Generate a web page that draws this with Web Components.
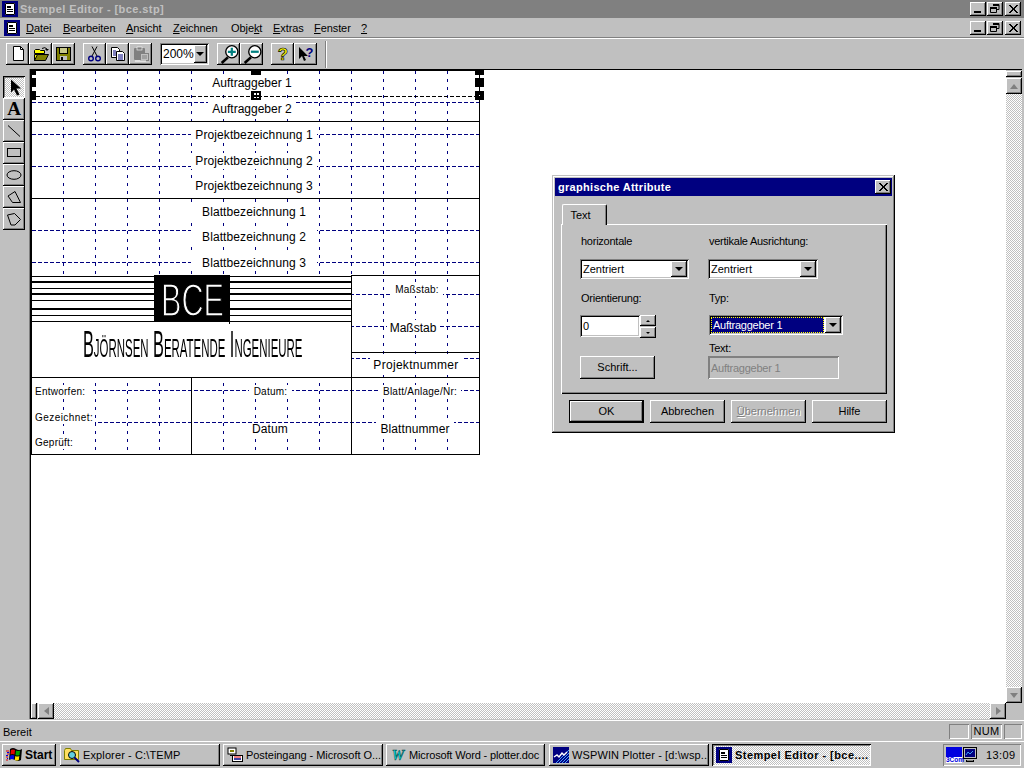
<!DOCTYPE html>
<html lang="de"><head><meta charset="utf-8"><title>Stempel Editor</title>
<style>
html,body{margin:0;padding:0;background:#c0c0c0}
body{font:11px "Liberation Sans",Arial,sans-serif;color:#000}
</style></head>
<body>
<win-app>
  <win-titlebar></win-titlebar>
  <win-menubar></win-menubar>
  <win-toolbar></win-toolbar>
  <win-work>
    <tool-palette></tool-palette>
    <mdi-client><stamp-sheet></stamp-sheet></mdi-client>
  </win-work>
  <status-bar></status-bar>
  <task-bar></task-bar>
  <attr-dialog></attr-dialog>
</win-app>
<script>
const RAISED='box-shadow:inset -1px -1px #000,inset 1px 1px #fff,inset -2px -2px #808080;';
const SUNKEN='box-shadow:inset 1px 1px #808080,inset -1px -1px #fff,inset 2px 2px #000,inset -2px -2px #c0c0c0;';
const DITHER='background:conic-gradient(#fff 25%,#c0c0c0 0 50%,#fff 0 75%,#c0c0c0 0) 0 0/2px 2px;';
const ICONS={
doc:`<rect width="16" height="16" fill="#000080"/><rect x="3" y="2" width="10" height="12" fill="#fff"/><path d="M3.5 2.5h9v11h-9z" fill="none" stroke="#000"/><path d="M5 5h4v2H5zM5 8h6v1H5zM5 10h6v1H5z" fill="#000"/>`,
new:`<path d="M3.5 .5h7l3 3v11h-10z" fill="#fff" stroke="#000"/><path d="M10.5 .5v3h3" fill="none" stroke="#000"/>`,
open:`<path d="M1.5 4.5l1-1h4l1 1h4v3h-10z" fill="#ffff00" stroke="#000"/><path d="M1.5 14.5v-6h10v6z" fill="#ffff00" stroke="#000"/><path d="M1.5 14.5l3-6h11l-3 6z" fill="#808000" stroke="#000"/><path d="M9 2.500q3-2 5 .5" fill="none" stroke="#000"/><path d="M12 3h4l-2 2z" fill="#000"/>`,
save:`<rect x=".5" y="1.500" width="14" height="13" fill="#808000" stroke="#000"/><rect x="3" y="2" width="9" height="6" fill="#000"/><rect x="4" y="2" width="7" height="5" fill="#c8c88a"/><rect x="4" y="10" width="7" height="4" fill="#c0c0c0"/><rect x="5" y="11" width="2" height="3" fill="#000"/>`,
cut:`<path d="M5 10L10 .5M10 10L5 .5" stroke="#000" fill="none"/><circle cx="4" cy="12.500" r="2.300" fill="none" stroke="#000080" stroke-width="1.400"/><circle cx="11" cy="12.500" r="2.300" fill="none" stroke="#000080" stroke-width="1.400"/>`,
copy:`<path d="M1.500 1.500h6l2 2v8h-8z" fill="#fff" stroke="#000"/><path d="M6.500 5.500h6l2 2v7h-8z" fill="#fff" stroke="#000"/><path d="M3 5h3M3 7h3M3 9h3M8 9h5M8 11h5M8 13h5" stroke="#000080"/>`,
paste:`<rect x="1" y="2" width="11" height="12" rx="1" fill="#808080"/><rect x="4" y="1" width="5" height="3" fill="#808080" stroke="#fff" stroke-width=".6"/><rect x="7.500" y="7.500" width="8" height="7" fill="#c0c0c0" stroke="#808080"/><path d="M9 10h5M9 12h5" stroke="#808080"/><path d="M2 15h11" stroke="#fff"/>`,
zin:`<path d="M7 11L1.500 16" stroke="#000" stroke-width="2.400"/><circle cx="10.500" cy="6" r="5.400" fill="#fff" stroke="#000" stroke-width="1.200"/><path d="M7 6h7M10.500 2.500v7" stroke="#008080" stroke-width="2"/>`,
zout:`<path d="M7 11L1.500 16" stroke="#000" stroke-width="2.400"/><circle cx="10.500" cy="6" r="5.400" fill="#fff" stroke="#000" stroke-width="1.200"/><path d="M7 6h7" stroke="#008080" stroke-width="2"/>`,
help:`<text x="8" y="13.500" text-anchor="middle" font-family="Liberation Sans" font-weight="700" font-size="15" fill="#ffff00" stroke="#000" stroke-width=".6">?</text>`,
ctx:`<path d="M1 1v12l3-3 2 5 2-1-2-4h4z" fill="#000"/><text x="11.500" y="11" text-anchor="middle" font-family="Liberation Sans" font-weight="700" font-size="13" fill="#000080">?</text>`,
flag:`<path d="M4 2q3-2 6 0t6 0l-1 11q-3 2-6 0t-6 0z" fill="#000"/><path d="M5 3q2-1 4 0l-.500 4.500q-2-1-4 0z" fill="#e00000"/><path d="M10 3.500q2 1 4 0l-.500 4.500q-2 1-4 0z" fill="#00a000"/><path d="M4.300 8.500q2-1 4 0l-.500 4q-2-1-4 0z" fill="#0000e0"/><path d="M9.300 9q2 1 4 0l-.500 4q-2 1-4 0z" fill="#ffe000"/><path d="M0 4h3M1 7h2M0 10h2M0 13h2" stroke="#e00000"/><path d="M1 5.500h2M0 8.500h2M1 11.500h1" stroke="#0000e0"/>`,
explorer:`<path d="M.5 3.500l1-2h5l1 2h7v9h-14z" fill="#ffe060" stroke="#808000"/><circle cx="8" cy="8" r="3.500" fill="#60d0e0" stroke="#000"/><path d="M10.500 10.500l4.500 4.500" stroke="#000080" stroke-width="2"/>`,
mail:`<rect x="1" y="1" width="8" height="6" fill="#fff" stroke="#000"/><rect x="3" y="3" width="4" height="2" fill="#808000"/><path d="M3 8h4v1H3z" fill="#000"/><rect x="5.500" y="8.500" width="10" height="6" fill="#fff" stroke="#000"/><path d="M7 10h7" stroke="#e00000"/><path d="M7 12h7" stroke="#000080" stroke-width="1.500"/>`,
word:`<text x="8" y="13" text-anchor="middle" font-family="Liberation Serif" font-style="italic" font-weight="700" font-size="14" fill="#00d8d8" stroke="#004040" stroke-width=".5">W</text>`,
wsp:`<rect width="16" height="16" fill="#000080"/><path d="M9 16L16 9M12 16l4-4M6 16L16 6M3 16L16 3" stroke="#40a0ff"/><path d="M1 10l3-2 2 2 3-4 2 2 3-3" stroke="#fff" stroke-width="1.400" fill="none"/>`,
monitor:`<rect x="1.500" y=".5" width="13" height="11" fill="#c0c0c0" stroke="#000"/><rect x="3" y="2" width="10" height="8" fill="#000080"/><path d="M4 8l2-3 2 2 3-3" stroke="#40a0ff" fill="none"/><path d="M4 13h8v2H4z" fill="#000"/><path d="M5 13h6v1H5z" fill="#808080"/>`
};
function icon(n,s=16){return `<svg width="${s}" height="${s}" viewBox="0 0 16 16" style="display:block;flex:none;overflow:visible" aria-hidden="true">${ICONS[n]}</svg>`}
function def(name,css,html){customElements.define(name,class extends HTMLElement{
  connectedCallback(){if(this.shadowRoot)return;const r=this.attachShadow({mode:'open'});
    r.innerHTML=`<style>${css}</style>`+(typeof html==='function'?html(this):html);}
});}

def('win-app',`:host{display:flex;flex-direction:column;width:1024px;height:768px;position:relative;overflow:hidden;background:#c0c0c0}`,`<slot></slot>`);

def('win-ctl',`:host{display:block;width:16px;height:14px;background:#c0c0c0;${RAISED}}svg{display:block}`,
 el=>{const k=el.getAttribute('k');const p={min:'<path d="M4 9h7v2H4z"/>',res:'<path d="M6 2.500h6v5h-2" fill="none" stroke="#000"/><path d="M6 2h6v2H6z"/><path d="M3.500 5.500h6v5h-6z" fill="#c0c0c0" stroke="#000"/><path d="M3 5h7v2H3z"/>',x:'<path d="M4 3l8 8M5 3l8 8M12 3l-8 8M13 3l-8 8" stroke="#000" fill="none"/>'}[k];
  return `<svg width="16" height="14" viewBox="0 0 16 14">${p}</svg>`});

def('win-titlebar',`:host{display:flex;align-items:center;height:18px;background:#808080;color:#c0c0c0;padding-left:2px;flex:none}
 b{margin-left:2px;font:700 11px "Liberation Sans",sans-serif;letter-spacing:.42px;white-space:nowrap}
 .c{margin-left:auto;display:flex;padding-right:3px}win-ctl+win-ctl{margin-left:1px}win-ctl:last-child{margin-left:2px}`,
 `${icon('doc')}<b>Stempel Editor - [bce.stp]</b><div class="c"><win-ctl k="min"></win-ctl><win-ctl k="res"></win-ctl><win-ctl k="x"></win-ctl></div>`);

def('win-menubar',`:host{display:flex;align-items:center;height:19px;padding-left:4px;flex:none;border-bottom:1px solid #808080;box-shadow:0 1px #fff;margin-bottom:1px;font-size:11px;box-sizing:content-box;letter-spacing:-.08px}
 .ic{margin-right:6px}span{display:block;white-space:nowrap;flex:none}
 .c{margin-left:auto;display:flex;padding-right:3px}win-ctl+win-ctl{margin-left:1px}win-ctl:last-child{margin-left:2px}`,
 ()=>{const items=[['<u>D</u>atei',37],['<u>B</u>earbeiten',63],['<u>A</u>nsicht',47],['<u>Z</u>eichnen',58],['Obje<u>k</u>t',42],['<u>E</u>xtras',41],['<u>F</u>enster',47],['<u>?</u>',12]];
 return `<div class="ic">${icon('doc')}</div>`+items.map(([t,w])=>`<span style="width:${w}px">${t}</span>`).join('')+`<div class="c"><win-ctl k="min"></win-ctl><win-ctl k="res"></win-ctl><win-ctl k="x"></win-ctl></div>`});

def('tool-btn',`:host{display:flex;align-items:center;justify-content:center;width:23px;height:22px;background:#c0c0c0;${RAISED}flex:none}`,`<slot></slot>`);

def('win-toolbar',`:host{display:flex;align-items:flex-start;height:26px;padding:4px 0 0 6px;flex:none;position:relative}
 .g{display:flex;margin-right:8px}
 .combo{width:49px;height:22px;box-sizing:border-box;margin-right:8px;background:#fff;${SUNKEN}display:flex;align-items:center;padding:2px 2px 2px 3px;font-size:12px;flex:none}
 .combo span{flex:1}.arr{width:16px;height:18px;background:#c0c0c0;${RAISED}display:flex;align-items:center;justify-content:center}
 .arr i{border:4px solid transparent;border-top:4px solid #000;border-bottom:0;display:block}
 .sep{width:0;height:27px;border-left:1px solid #808080;border-right:1px solid #fff;margin-top:-2px;margin-left:0}`,
 ()=>{const g=a=>`<div class="g">${a.map(n=>`<tool-btn>${icon(n,n[0]=='z'||n=='help'?18:16)}</tool-btn>`).join('')}</div>`;
 return g(['new','open','save'])+g(['cut','copy','paste'])+`<div class="combo"><span>200%</span><div class="arr"><i></i></div></div>`+g(['zin','zout'])+g(['help','ctx'])+`<div class="sep"></div>`});

def('win-work',`:host{display:flex;flex:1;min-height:0}`,`<slot></slot>`);

def('tool-palette',`:host{display:flex;flex-direction:column;width:22px;padding:7px 5px 0 3px;flex:none;box-shadow:inset -1px 0 #808080}
 tool-btn{width:22px}tool-btn.on{${DITHER}box-shadow:inset 1px 1px #000,inset -1px -1px #fff,inset 2px 2px #808080}
 text{font:700 19px "Liberation Serif",serif}`,
 ()=>{const s=(b,c='')=>`<tool-btn class="${c}"><svg width="22" height="22" viewBox="0 0 22 22" style="display:block">${b}</svg></tool-btn>`;
 return s('<path d="M8 3.500v13l3-3 3 6 2.500-1-3-6h4.500z" fill="#000"/>','on')
 +s('<text x="11" y="17" text-anchor="middle" fill="#000">A</text>')
 +s('<path d="M5 5.500L17 16.500" stroke="#000" fill="none"/>')
 +s('<rect x="4.500" y="6.500" width="13" height="8" fill="none" stroke="#000"/>')
 +s('<ellipse cx="11" cy="11" rx="7" ry="4.300" fill="none" stroke="#000"/>')
 +s('<path d="M5 10L12 5.500 17.500 16.500H9.500z" fill="none" stroke="#000"/>')
 +s('<path d="M4.500 7L11.500 5.500 17.500 11.500 12 17H8z" fill="none" stroke="#000"/>')});

def('win-scroll',`:host{display:flex;background:#c0c0c0;flex:none}
 :host([o=v]){flex-direction:column;width:16px;height:100%}
 :host([o=h]){height:16px}
 .split{background:#c0c0c0;${RAISED}flex:none;}
 :host([o=v]) .split{height:6px;margin-top:1px;margin-bottom:1px}
 :host([o=h]) .split{width:6px;margin-right:1px}
 .b{width:16px;height:16px;flex:none;background:#c0c0c0;${RAISED}display:flex;align-items:center;justify-content:center}
 .t{flex:1;${DITHER}}
 i{display:block;width:0;height:0;border:4px solid transparent}
 .u{border-top:0;border-bottom:5px solid #808080}.d{border-bottom:0;border-top:5px solid #808080}
 .l{border-left:0;border-right:5px solid #808080}.r{border-right:0;border-left:5px solid #808080}`,
 el=>{const v=el.getAttribute('o')=='v';return `<div class="split"></div><div class="b"><i class="${v?'u':'l'}"></i></div><div class="t"></div><div class="b"><i class="${v?'d':'r'}"></i></div>`});

def('mdi-client',`:host{flex:1;display:grid;grid-template-columns:1fr 16px 2px;grid-template-rows:1fr 16px;min-width:0}
 .c{background:#fff;border-left:1px solid #000;border-top:1px solid #000;overflow:hidden;position:relative}
 .v{border-top:1px solid #000;background:#fff}
 .h{border-left:1px solid #000;border-bottom:0}
 .k{grid-column:3;grid-row:1/3}`,
 `<div class="c"><slot></slot></div><div class="v"><win-scroll o="v"></win-scroll></div><div class="k"></div><div class="h"><win-scroll o="h"></win-scroll></div><div class="corner"></div>`);

def('stamp-sheet',`:host{display:block;width:460px;height:390px;position:relative}
 svg{position:absolute;left:0;top:0;display:block}
 .t{position:absolute;background:#fff;display:flex;align-items:center;justify-content:center;white-space:nowrap;font:12px "Liberation Sans",sans-serif;color:#000}
 .s{font-size:10px;letter-spacing:.25px}.l{justify-content:flex-start;padding-left:3px;box-sizing:border-box}.w{letter-spacing:.3px}.n{letter-spacing:.1px}.g{letter-spacing:.45px}
 .bce{position:absolute;left:130px;top:207px;font:46px/46px "Liberation Sans",sans-serif;color:#fff;-webkit-text-stroke:1.400px #000;transform:scaleX(.666);transform-origin:0 0;white-space:nowrap}
 .bji{position:absolute;left:52px;top:256px;font:37px/37px "Liberation Sans",sans-serif;font-variant:small-caps;color:#000;transform:scaleX(.44);transform-origin:0 0;white-space:nowrap}`,
 ()=>{
  let grid='';
  for(let x=63;x<=447;x+=32)grid+=`<path d="M${x+.5} 71V454"/>`;
  let hg='';
  for(let y=102;y<=422;y+=32)hg+=`<path d="M32 ${y+.5}H479"/>`;
  const sol=[[31,121,480],[31,198,480],[351,275,480],[351,352,480],[31,377,480],[31,454,480],[31,70,480]].map(([a,y,b])=>`M${a} ${y+.5}H${b}`).join('')
   +'M31.500 70V455M479.500 70V455M191.500 377V454M351.500 275V454';
  const lg=[[276,1],[281,2],[288,1],[293,2],[300,1],[308,2],[315,1],[321,1]].map(([y,h])=>`<rect x="32" y="${y}" width="320" height="${h}"/>`).join('');
  const labels=[
   ['Auftraggeber 1',208,75,88,16],['Auftraggeber 2',208,101,88,16],
   ['Projektbezeichnung 1',191,127,126,16,'n'],['Projektbezeichnung 2',191,153,126,16,'n'],['Projektbezeichnung 3',191,178,126,16,'n'],
   ['Blattbezeichnung 1',191,204,126,16,'n'],['Blattbezeichnung 2',191,229,126,16,'n'],['Blattbezeichnung 3',191,255,126,16,'n'],
   ['Maßstab:',391,283,52,13,'s'],['Maßstab',387,320,52,15],['Projektnummer',370,357,92,16,'w'],
   ['Blatt/Anlage/Nr:',379,385,82,13,'s'],['Blattnummer',376,421,78,15,'n'],
   ['Datum:',249,385,43,13,'s'],['Datum',250,423,40,11,'n'],
   ['Entworfen:',32,385,61,13,'s l'],['Gezeichnet:',32,411,63,13,'s l g'],['Geprüft:',32,436,41,13,'s l']
  ].map(([t,x,y,w,h,c=''])=>`<div class="t ${c}" style="left:${x-31}px;top:${y-70}px;width:${w}px;height:${h}px">${t}</div>`).join('');
  const base=`<svg width="460" height="390" viewBox="31 70 460 390" shape-rendering="crispEdges">
   <g fill="none" stroke="#000080" stroke-dasharray="3 5">${grid}</g>
   <g fill="none" stroke="#000080" stroke-dasharray="4 2">${hg}</g>
   <rect x="32" y="275" width="319" height="102" fill="#fff"/>
   <rect x="229" y="321" width="1" height="3" fill="#000"/>
   <g fill="#000">${lg}</g>
   <path d="${sol}" fill="none" stroke="#000"/>
   <rect x="154" y="275" width="76" height="47" fill="#000"/></svg>`;
  const logo=`<div class="bce">BCE</div><div class="bji">Björnsen Beratende Ingenieure</div>`;
  const sel=`<svg width="460" height="390" viewBox="31 70 460 390" shape-rendering="crispEdges">
   <path d="M36 96.500H475" stroke="#000" stroke-dasharray="4 2" fill="none"/>
   <g fill="#000"><rect x="27" y="66" width="9" height="9"/><rect x="27" y="78" width="9" height="9"/><rect x="27" y="91" width="9" height="9"/>
   <rect x="251" y="66" width="10" height="9"/><rect x="251" y="91" width="10" height="9"/>
   <rect x="475" y="66" width="9" height="9"/><rect x="475" y="78" width="9" height="9"/><rect x="475" y="91" width="9" height="9"/></g>
   <g fill="#fff"><rect x="254" y="93" width="2" height="2"/><rect x="257" y="93" width="2" height="2"/><rect x="254" y="97" width="2" height="1"/><rect x="257" y="97" width="2" height="1"/><rect x="479" y="95" width="1" height="1"/></g></svg>`;
  return base+logo+labels+sel;
 });

def('status-bar',`:host{display:flex;align-items:center;height:20px;flex:none;border-top:1px solid #fff;margin-top:1px;padding-left:3px;font-size:11px;box-sizing:content-box}
 span{flex:1;padding-top:1px}.p{height:15px;box-sizing:border-box;box-shadow:inset 1px 1px #808080,inset -1px -1px #fff;display:flex;align-items:center;justify-content:center;margin-left:2px;font-size:11px;letter-spacing:.3px}`,
 `<span>Bereit</span><div class="p" style="width:20px"></div><div class="p" style="width:31px">NUM</div><div class="p" style="width:18px;margin-right:2px"></div>`);

def('task-btn',`:host{display:flex;align-items:center;height:22px;box-sizing:border-box;background:#c0c0c0;${RAISED}padding-left:4px;flex:none;overflow:hidden;white-space:nowrap;font-size:11px}
 :host([on]){${DITHER}box-shadow:inset 1px 1px #000,inset -1px -1px #fff,inset 2px 2px #808080;font-weight:700}
 span{margin-left:3px}`,
 el=>`${icon(el.getAttribute('i'))}<span style="letter-spacing:${el.getAttribute('ls')||0}px">${el.getAttribute('t')}</span>`);

def('task-bar',`:host{display:flex;height:24px;flex:none;padding:2px 0 0 2px;border-top:1px solid #fff;box-sizing:content-box}
 .st{display:flex;align-items:center;width:54px;height:22px;box-sizing:border-box;padding-left:4px;background:#c0c0c0;${RAISED}font-weight:700;font-size:12px;margin-right:4px;flex:none}
 .st span{margin-left:3px}
 task-btn{margin-right:3px}
 .tray{margin-left:auto;margin-right:3px;width:78px;height:22px;box-sizing:border-box;box-shadow:inset 1px 1px #808080,inset -1px -1px #fff;display:flex;align-items:center;padding-left:3px;flex:none}
 .com{width:16px;height:16px;position:relative;background:linear-gradient(#0000e0 0 10px,#fff 10px);flex:none}
 .com b{position:absolute;left:0;bottom:0;font:700 6.500px "Liberation Sans",sans-serif;color:#0000e0;line-height:7px;white-space:nowrap}
 .clk{margin-left:8px;font-size:11px;letter-spacing:.4px}`,
 `<div class="st">${icon('flag')}<span>Start</span></div>
 <task-btn i="explorer" t="Explorer - C:\\TEMP" ls=".12" style="width:160px"></task-btn>
 <task-btn i="mail" t="Posteingang - Microsoft O..." ls="-.05" style="width:160px"></task-btn>
 <task-btn i="word" t="Microsoft Word - plotter.doc" ls="-.15" style="width:159px;margin-right:4px"></task-btn>
 <task-btn i="wsp" t="WSPWIN Plotter - [d:\\wsp..." ls=".12" style="width:160px"></task-btn>
 <task-btn i="doc" t="Stempel Editor - [bce...." ls=".45" on style="width:159px"></task-btn>
 <div class="tray"><div class="com"><b>3Com</b></div>${icon('monitor')}<span class="clk">13:09</span></div>`);

def('win-combo',`:host{display:flex;height:20px;box-sizing:border-box;background:#fff;${SUNKEN}padding:2px;align-items:stretch;font-size:11px}
 span{flex:1;display:flex;align-items:center;padding-left:1px;white-space:nowrap;overflow:hidden;margin-right:1px}
 :host([sel]) span{background:#000080;color:#fff;outline:1px dotted #ffff00;outline-offset:-1px;padding-left:2px;letter-spacing:-.25px}
 .a{width:16px;background:#c0c0c0;${RAISED}display:flex;align-items:center;justify-content:center;flex:none}
 i{display:block;border:4px solid transparent;border-top:4px solid #000;border-bottom:0}`,
 el=>`<span>${el.getAttribute('t')}</span><div class="a"><i></i></div>`);

def('dlg-btn',`:host{display:flex;align-items:center;justify-content:center;width:75px;height:23px;box-sizing:border-box;padding-bottom:1px;background:#c0c0c0;${RAISED}font-size:11px;flex:none;white-space:nowrap}
 :host([def]){box-shadow:inset 0 0 0 1px #000,inset -2px -2px #000,inset 2px 2px #fff,inset -3px -3px #808080}
 :host([dis]){color:#808080;text-shadow:1px 1px #fff}`,`<slot></slot>`);

def('attr-dialog',`:host{position:absolute;left:552px;top:175px;width:343px;height:258px;box-sizing:border-box;padding:3px;background:#c0c0c0;display:block;font-size:11px;
  box-shadow:inset -1px -1px #000,inset 1px 1px #c0c0c0,inset -2px -2px #808080,inset 2px 2px #fff}
 .tt{height:18px;background:#000080;color:#fff;display:flex;align-items:center;padding:0 1px 0 3px;font-weight:700;letter-spacing:.3px;white-space:nowrap}
 .x{margin-left:auto;width:16px;height:14px;background:#c0c0c0;${RAISED}}.x svg{display:block}
 .body{padding:8px 0 0 6px}
 .tab{margin-left:1px;width:45px;height:21px;box-sizing:border-box;background:#c0c0c0;border-top:1px solid #fff;border-left:1px solid #fff;border-right:1px solid #000;border-radius:2px 2px 0 0;display:flex;align-items:center;justify-content:center;position:relative;z-index:1;box-shadow:inset -1px 0 #808080;padding-right:8px}
 .panel{margin-top:-1px;width:326px;height:170px;box-sizing:border-box;padding:10px 0 0 19px;display:flex;box-shadow:inset 1px 1px #fff,inset -1px -1px #000,inset -2px -2px #808080}
 .col{display:flex;flex-direction:column;align-items:flex-start}
 .left{width:128px;flex:none}
 label{display:block;height:14px;line-height:14px;white-space:nowrap;padding-left:1px;letter-spacing:-.25px}
 .edit{width:60px;height:22px;box-sizing:border-box;background:#fff;${SUNKEN}display:flex;align-items:center;padding-left:3px}
 .row{display:flex;margin-top:10px}
 .spin{width:16px;margin-left:0;display:flex;flex-direction:column;gap:1px;padding-top:0}
 .spin div{height:11px;background:#c0c0c0;${RAISED}display:flex;align-items:center;justify-content:center}
 .spin i{display:block;border:2px solid transparent}.spin .u{border-top:0;border-bottom:2px solid #000}.spin .d{border-bottom:0;border-top:2px solid #000}
 .dis{width:131px;height:23px;box-sizing:border-box;margin-top:2px;box-shadow:inset 1px 1px #808080,inset -1px -1px #fff,inset 2px 2px #808080;display:flex;align-items:center;padding-left:3px;color:#808080;letter-spacing:-.25px;white-space:nowrap}
 .btns{display:flex;gap:6px;margin:6px 0 0 8px}`,
 `<div class="tt">graphische Attribute<div class="x"><svg width="16" height="14" viewBox="0 0 16 14"><path d="M4 3l8 8M5 3l8 8M12 3l-8 8M13 3l-8 8" stroke="#000" fill="none"/></svg></div></div>
 <div class="body"><div class="tab">Text</div>
 <div class="panel">
  <div class="col left">
   <label>horizontale</label>
   <win-combo t="Zentriert" style="width:109px;margin-top:11px"></win-combo>
   <label style="margin-top:12px">Orientierung:</label>
   <div class="row"><div class="edit">0</div><div class="spin"><div><i class="u"></i></div><div><i class="d"></i></div></div></div>
   <dlg-btn style="margin-top:18px">Schrift...</dlg-btn>
  </div>
  <div class="col">
   <label>vertikale Ausrichtung:</label>
   <win-combo t="Zentriert" style="width:110px;margin-top:11px"></win-combo>
   <label style="margin-top:12px">Typ:</label>
   <win-combo sel t="Auftraggeber 1" style="width:134px;margin:10px 0 0 1px"></win-combo>
   <label style="margin-top:6px;height:13px">Text:</label>
   <div class="dis">Auftraggeber 1</div>
  </div>
 </div>
 <div class="btns"><dlg-btn def>OK</dlg-btn><dlg-btn>Abbrechen</dlg-btn><dlg-btn dis><span><u>Ü</u>bernehmen</span></dlg-btn><dlg-btn>Hilfe</dlg-btn></div>
 </div>`);
</script>
</body></html>
